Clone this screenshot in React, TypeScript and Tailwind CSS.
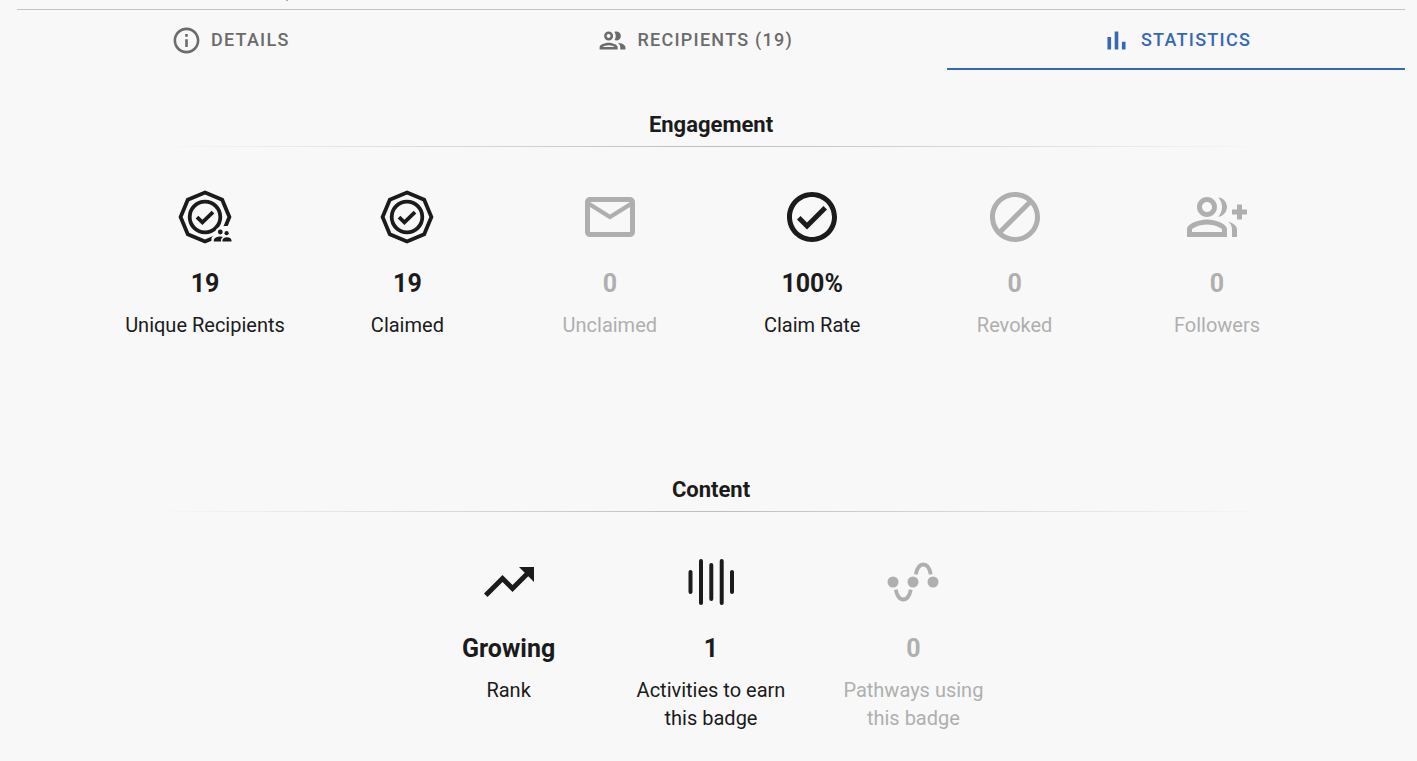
import type { ComponentType, ReactNode } from "react";
import {
  MdBlock,
  MdMailOutline,
  MdOutlineCheckCircle,
  MdOutlineGroupAdd,
  MdOutlineInfo,
  MdOutlinePeople,
  MdTrendingUp,
} from "react-icons/md";

type IconType = ComponentType<{ className?: string }>;

type Stat = {
  icon: IconType;
  value: string;
  label: string;
};

const tabs: { label: string; icon: IconType; active?: boolean }[] = [
  { label: "Details", icon: MdOutlineInfo },
  { label: "Recipients (19)", icon: MdOutlinePeople },
  { label: "Statistics", icon: BarsIcon, active: true },
];

const engagement: Stat[] = [
  { icon: UniqueRecipientsIcon, value: "19", label: "Unique Recipients" },
  { icon: BadgeIcon, value: "19", label: "Claimed" },
  { icon: MdMailOutline, value: "0", label: "Unclaimed" },
  { icon: MdOutlineCheckCircle, value: "100%", label: "Claim Rate" },
  { icon: MdBlock, value: "0", label: "Revoked" },
  { icon: MdOutlineGroupAdd, value: "0", label: "Followers" },
];

const content: Stat[] = [
  { icon: MdTrendingUp, value: "Growing", label: "Rank" },
  { icon: ActivitiesIcon, value: "1", label: "Activities to earn this badge" },
  { icon: PathwayIcon, value: "0", label: "Pathways using this badge" },
];

export default function App() {
  return (
    <div className="min-h-screen bg-[#f8f8f8] pr-3 pl-[17px] font-[Roboto,sans-serif] text-[#1b1b1b]">
      <div className="h-[9px]">
        <div className="ml-[269px] h-px w-0.5 bg-[#aaaaaa]" />
      </div>
      <nav className="flex border-t border-[#c4c4c4]" role="tablist">
        {tabs.map(({ label, icon: Icon, active }) => (
          <button
            key={label}
            type="button"
            role="tab"
            aria-selected={!!active}
            className={`flex h-[60px] flex-auto items-center justify-center gap-[9px] border-b-2 pt-0.5 text-lg font-medium tracking-[0.07em] uppercase ${
              active
                ? "border-[#3668b3] text-[#3668b3]"
                : "border-transparent text-[#6b6b6b]"
            }`}
          >
            <Icon className="size-[31px]" />
            {label}
          </button>
        ))}
      </nav>

      <main className="mx-auto w-7/8">
        <Section title="Engagement">
          {engagement.map((stat) => (
            <StatItem key={stat.label} stat={stat} />
          ))}
        </Section>
        <Section title="Content">
          {content.map((stat) => (
            <StatItem key={stat.label} stat={stat} />
          ))}
        </Section>
      </main>
    </div>
  );
}

function Section({ title, children }: { title: string; children: ReactNode }) {
  return (
    <section className="mb-[68px]">
      <h2 className="pt-[38px] text-center text-[22px] leading-[34px] font-bold">
        {title}
      </h2>
      <div className="mx-auto mt-1 h-px w-11/12 bg-linear-to-r from-transparent via-[#bdbdbd] to-transparent" />
      <div className="flex justify-center pt-10">{children}</div>
    </section>
  );
}

function StatItem({ stat }: { stat: Stat }) {
  const { icon: Icon, value, label } = stat;
  return (
    <div
      className={`flex min-h-[180px] w-1/6 flex-col items-center px-5 text-center ${
        value === "0" ? "text-[#afafaf]" : ""
      }`}
    >
      <Icon className="size-[60px]" />
      <p className="mt-[21px] text-[25px] leading-8 font-bold">{value}</p>
      <p className="mt-[11px] text-xl leading-7">{label}</p>
    </div>
  );
}

function BarsIcon({ className }: { className?: string }) {
  return (
    <svg className={className} viewBox="0 0 24 24" fill="currentColor">
      <path d="M5 9.2h2.8V19H5zM10.6 5h2.8v14h-2.8zm5.6 8H19v6h-2.8z" />
    </svg>
  );
}

function BadgeShape() {
  return (
    <>
      <path d="M30 5.6L47.2 12.8L54.4 30L47.2 47.2L30 54.4L12.8 47.2L5.6 30L12.8 12.8Z" />
      <circle cx="30" cy="30" r="15.3" />
      <path d="M22 30.2L27.4 35.4L38 25.2" />
    </>
  );
}

function BadgeIcon({ className }: { className?: string }) {
  return (
    <svg
      className={className}
      viewBox="0 0 60 60"
      fill="none"
      stroke="currentColor"
      strokeWidth={3.8}
    >
      <BadgeShape />
    </svg>
  );
}

function UniqueRecipientsIcon({ className }: { className?: string }) {
  return (
    <svg
      className={className}
      viewBox="0 0 60 60"
      fill="none"
      stroke="currentColor"
      strokeWidth={3.8}
    >
      <mask id="people-cutout" maskUnits="userSpaceOnUse" x="0" y="0" width="60" height="60">
        <path fill="white" stroke="none" d="M0 0H60V39H50Q45 39 41.5 42Q40 47 36.5 51V60H0Z" />
      </mask>
      <g mask="url(#people-cutout)">
        <BadgeShape />
      </g>
      <g fill="currentColor" stroke="none">
        <circle cx="45.3" cy="45" r="2.4" />
        <circle cx="51.6" cy="46.2" r="2.1" />
        <path d="M38.8 54.6V53.4C38.8 51 42.5 49.5 45.5 49.5Q46.8 49.5 48 50C46.5 51 46 52 46 53.4V54.6Z" />
        <path d="M47.4 54.6V53.6C47.4 51.4 49.6 50.2 52 50.2S56.5 51.4 56.5 53.6V54.6Z" />
      </g>
    </svg>
  );
}

function ActivitiesIcon({ className }: { className?: string }) {
  return (
    <svg
      className={className}
      viewBox="0 0 60 60"
      fill="none"
      stroke="currentColor"
      strokeWidth={4}
      strokeLinecap="round"
    >
      <path d="M9.5 20V40M20 9V51M30.3 13V47M40.7 9V51M51 20V40" />
    </svg>
  );
}

function PathwayIcon({ className }: { className?: string }) {
  return (
    <svg className={className} viewBox="0 0 60 60" fill="none">
      <g fill="currentColor">
        <circle cx="10" cy="30" r="5.5" />
        <circle cx="30" cy="30" r="5.5" />
        <circle cx="50" cy="30" r="5.5" />
      </g>
      <g stroke="currentColor" strokeWidth={3.8}>
        <path d="M12.8 37.7C14 44 16 47.5 20.3 47.5S26.6 44 27.8 37.7" />
        <path d="M32.8 22.3C34 16 36 12.5 40.3 12.5S46.6 16 47.8 22.3" />
      </g>
    </svg>
  );
}
